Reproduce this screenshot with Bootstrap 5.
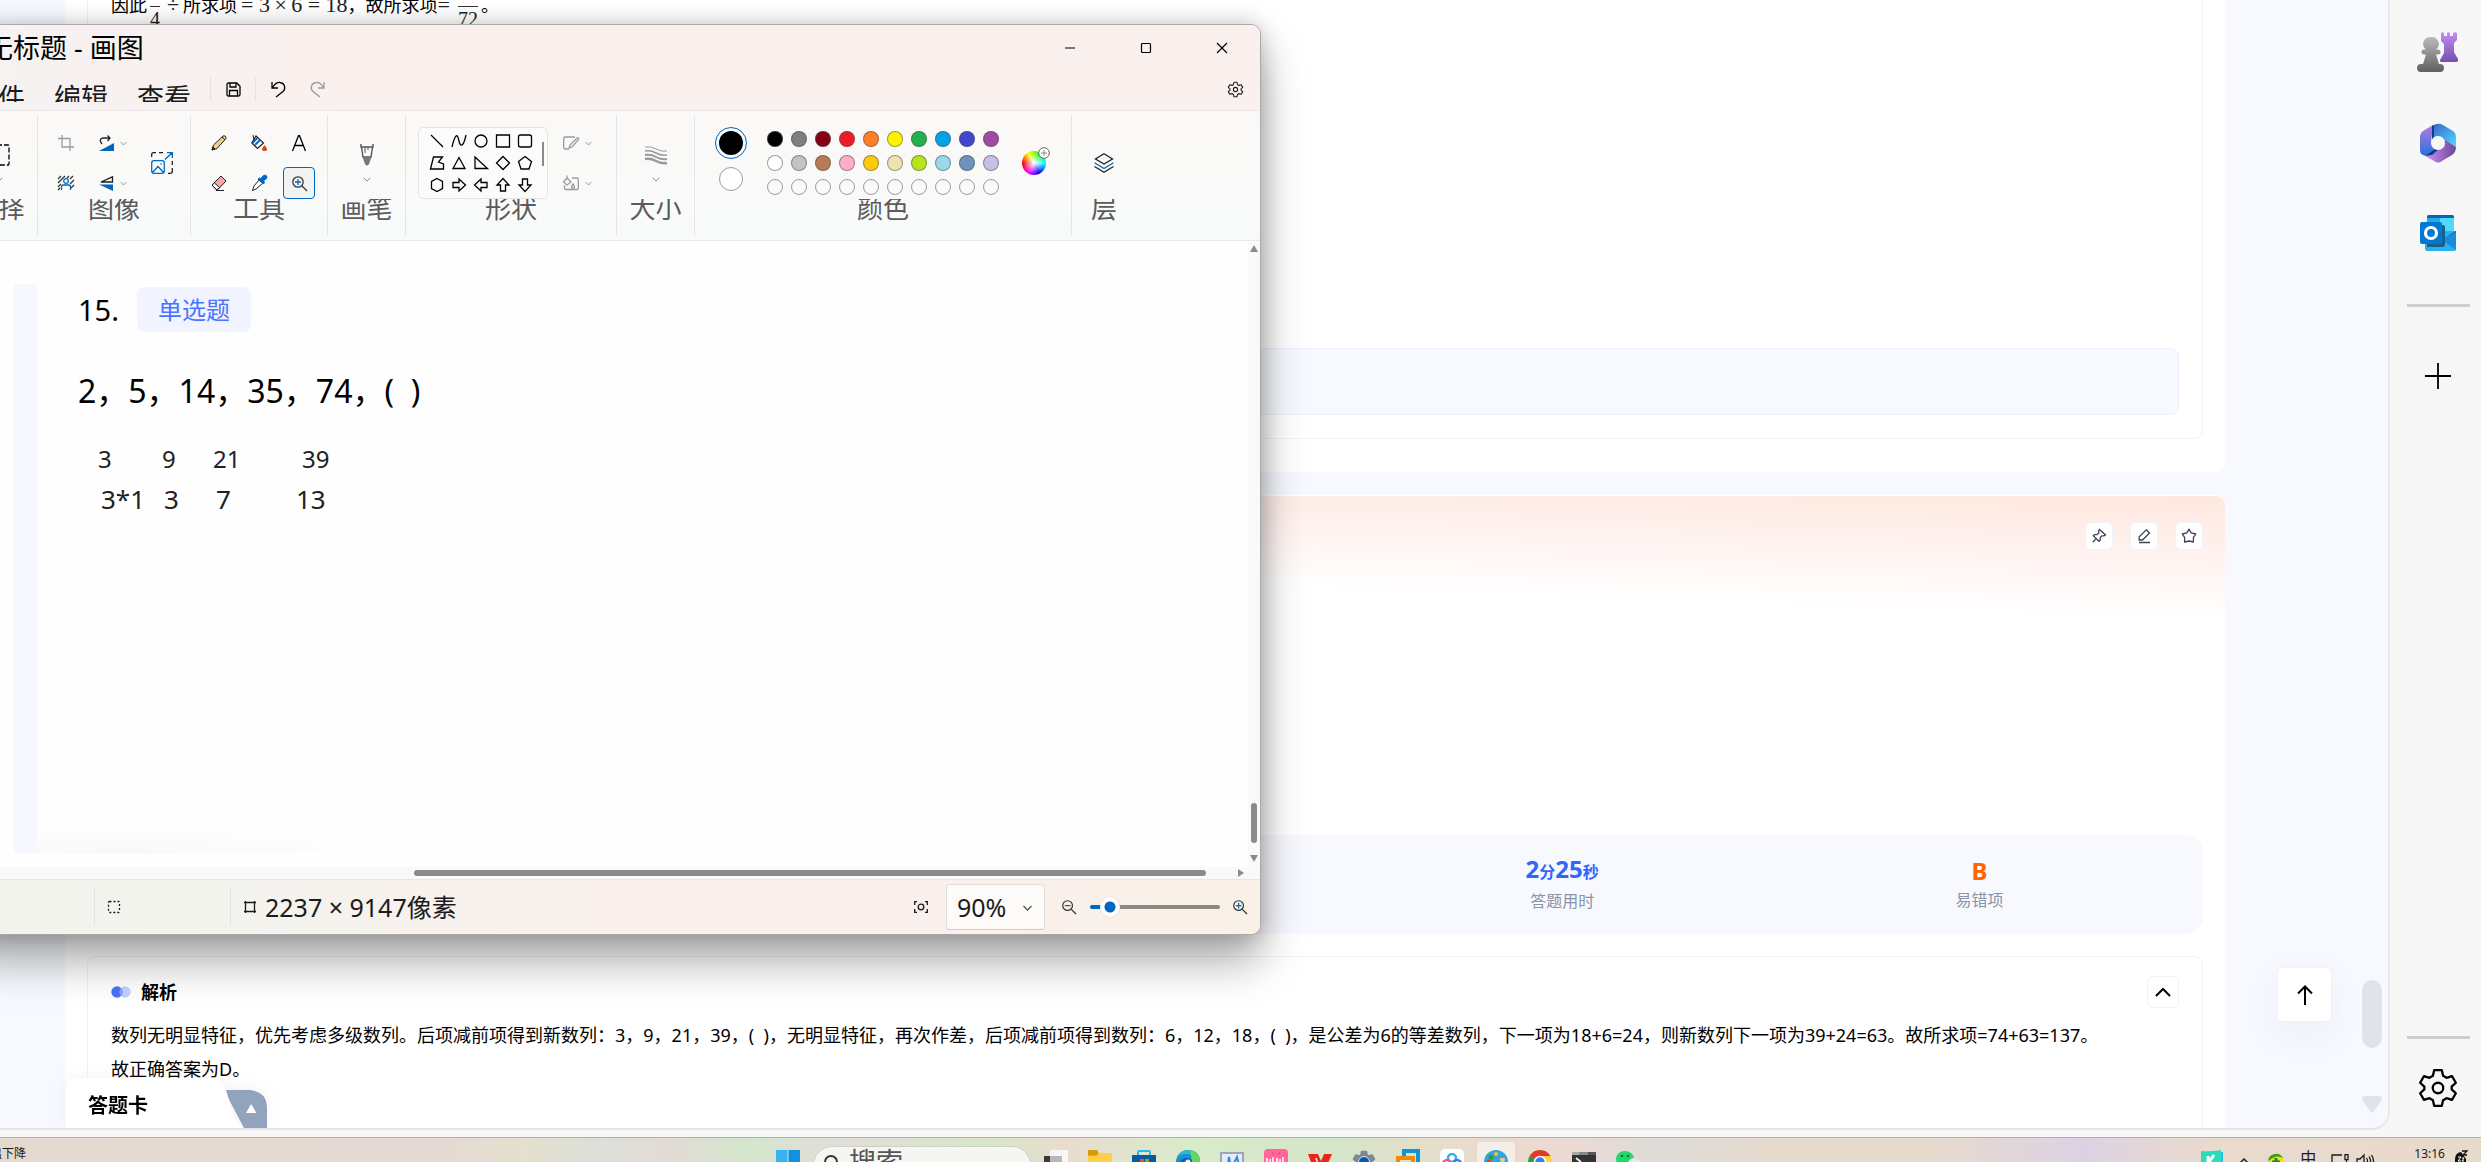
<!DOCTYPE html>
<html lang="zh-CN">
<head>
<meta charset="utf-8">
<meta name="viewport" content="width=device-width, initial-scale=1">
<title>桌面</title>
<link rel="stylesheet" href="https://cdn.jsdelivr.net/npm/bootstrap@5.3.0/dist/css/bootstrap.min.css">
<style>
body{font-family:"Noto Sans","Noto Sans CJK SC",sans-serif;font-size:18px;line-height:34px;color:#000;background:#f7f7f7}
button{font:inherit;color:inherit;border:0;background:none;padding:0;display:inline-flex;align-items:center;justify-content:center}
svg{display:block;flex:none;overflow:visible}
.ln{fill:none;stroke:currentColor;stroke-width:1.3}
/* browser */
.browser{min-height:0;padding-bottom:7px}
.viewport{background:#f7f9fe;border-right:2px solid #e8eaec;border-bottom:2px solid #e3e5e7;border-bottom-right-radius:18px;padding:0 163px 0 65px;min-width:0}
.qcard{background:#fff;padding:0 22px}
.qcard-a{border-radius:0 0 10px 10px;padding-bottom:33px}
.panel{border:1px solid #eff1fb;border-radius:8px;padding:0 23px}
.panel-a{border-top:0;border-radius:0 0 8px 8px;padding-bottom:23px}
.formula{height:348px;white-space:nowrap}
.formula>div{height:10px;line-height:10px}
.mathy{font-family:"Liberation Serif",serif;font-size:22px;color:#222}
.frac{align-self:flex-start;font-size:20px;margin:6px 3px 0;border-top:1px solid #333;padding-top:5px;line-height:14px}
.answerbox{height:67px;background:#f7f9fe;border:1px solid #eff2fb;border-radius:8px}
.qcard-b{margin-top:23px;border-radius:10px 10px 0 0;background:linear-gradient(182deg,#fee7dd,#fff2ef 29%,#fff 62%) top/100% 126px no-repeat #fff;border-top:1px solid #fff}
.tools{padding-top:26px;gap:17px}
.toolbtn{width:28px;height:28px;background:#fff;border-radius:6px;border:1px solid #f1f3fb;color:#3c4354}
.stats{margin-top:285px;height:99px;background:#f8f9fe;border-radius:18px;padding:0 15px}
.stat{width:20%;line-height:30px}
.stat strong{font-size:24px}.stat small{font-size:16px}
.stat span{font-size:16px;color:#8a93a8;line-height:28px}
.panel-b{margin-top:22px;padding-top:18px;height:240px}
.fold{width:32px;height:32px;border:1px solid #eff1fb;border-radius:6px}
.explain{padding-top:9px}
.sheet{left:66px;bottom:0;width:202px;height:50px;filter:drop-shadow(0 -2px 8px rgba(60,70,120,.06))}
.sheet b{left:22px;top:11px;font-size:20px}
.totop{right:56px;bottom:106px;width:55px;height:55px;background:#fff;border:1px solid #f1f2fa;border-radius:6px;box-shadow:0 12px 36px rgba(90,90,140,.06)}
.pagescroll{right:6px;bottom:15px;width:20px;gap:48px}
.pagescroll i{width:20px;height:68px;border-radius:10px;background:#e1e2ec}
.side{width:91px;padding:32px 0 21px 5px}
.side button{min-height:42px}
.side hr{width:63px;height:3px;margin:0;border:0;background:#cfcfcf;opacity:1}
/* paint window */
.paint{left:-41px;right:1220px;top:24px;bottom:227px;background:#fff;border:1px solid #aaa9a9;border-radius:10px;box-shadow:0 26px 44px rgba(0,0,0,.34),0 0 22px rgba(0,0,0,.2);overflow:hidden}
.paint-head{background:linear-gradient(100deg,#f5f3f2 0,#f7f1f0 14%,#faf0ee 30%,#faf0ee)}
.ptitle{height:46px;padding-left:26px;font-size:27px}
.winbtn{width:76px;height:46px}
.pmenu{height:40px;padding:0 16px 3px 11px;border-bottom:1px solid #e8e6e6}
.pmenu a{font-size:27px;line-height:32px;height:20px;overflow:hidden;align-self:flex-start;margin:11px 29px 0 0;color:#1b1b1b;text-decoration:none}
.vsep{width:1px;height:24px;background:#e4e2e1}
.pmenu .vsep:first-of-type{margin-left:-10px}
.mbtn{width:44px;height:30px}
.ribbon{height:130px;padding:4px 0;border-bottom:1px solid #e7e7e7;background:linear-gradient(180deg,#fbf9f7,#f8fafa)}
.rgroup{padding-top:12px;border-right:1px solid #e6e6e6;align-items:center}
.rgroup:last-child{border:0}
.rbody{height:72px;align-items:center;justify-content:center}
.rlabel{height:22px;overflow:hidden;display:flex;align-items:flex-end;font-size:26px;line-height:26px;color:#5b5b5b}
.w78{width:78px}.w153{width:153px}.w137{width:137px}.w211{width:211px}.w377{width:377px}.w64{width:64px}
.cell{width:28px;height:28px}
.cellb{width:32px;height:32px}
.chev{width:12px;height:24px;color:#8b8b8b}
.dim{color:#9b9b9b}
.picked{border:1px solid #0067c0;border-radius:4px;background:#f1f3f3}
.grid3{display:grid;grid-template-columns:repeat(3,32px);gap:8px}
.vstack24{padding-top:8px}
.vstack24 button{height:24px;width:28px}
.shapebody{gap:9px;padding-right:7px}
.shapes{width:130px;height:72px;border:1px solid #e4e4e4;border-radius:5px;padding:2px 3px 2px 7px;background:#fbfbfa}
.shapegrid{display:grid;grid-template-columns:repeat(5,22px);grid-auto-rows:22px}
.shapes i{width:2px;height:24px;background:#8a8a8a;margin:12px 0 0 auto;align-self:flex-start}
.pair{gap:8px;padding-bottom:8px}
.ring{width:32px;height:32px;border:1px solid #0067c0;border-radius:50%;padding:3px}
.ring i,.secondary{display:block;width:24px;height:24px;border-radius:50%;background:#000}
.secondary{background:#fff;border:1px solid #9a9a9a}
.swatches{display:grid;grid-template-columns:repeat(10,24px);grid-auto-rows:24px}
.swatches i{width:16px;height:16px;border-radius:50%;border:1px solid rgba(80,80,80,.55)}
.wheel{width:24px;height:24px;border-radius:50%;background:radial-gradient(circle,#fff 0,rgba(255,255,255,0) 65%),conic-gradient(from 90deg,#0ff,#00f,#f0f,#f00,#ff0,#0f0,#0ff)}
.wheelbox{width:30px}
.wheelbox svg{right:-1px;top:-4px}
.work{min-height:0}
.canvas{background:#fefefe;min-width:0}
.gutter{left:54px;top:43px;bottom:14px;width:23px;background:#f7f8fe}
.fade-end{left:77px;bottom:14px;width:340px;height:24px;background:radial-gradient(ellipse at 25% 100%,#f8f8f9,#fefefe 75%)}
.doc{padding:46px 0 0 118px}
.num{font-size:29px;margin-right:21px;width:38px}
.kind{height:45px;padding:0 21px;background:#f1f3fe;border-radius:8px;color:#4a73ff;font-size:24px}
.ask{font-size:32px;margin-top:41px;line-height:36px;white-space:pre}
.note{left:0;color:#222;line-height:30px}
.n1{top:203px;font-size:24px}.n2{top:243px;font-size:26px}
.note span{position:absolute}
.vscroll{width:12px;background:#f9f9f9;padding:4px 0}
.vscroll i{width:6px;height:40px;border-radius:3px;background:#8a8a8a;margin:auto 0 12px}
.hscroll{height:13px;background:#f9f9f8;padding:0 16px 0 454px;border-bottom:1px solid #e8e6e4}
.hscroll i{height:6px;border-radius:3px;background:#8a8a8a;margin-right:32px}
.pstatus{height:54px;background:linear-gradient(90deg,#f3f3ee,#f4f3ee 22%,#f9f0ed 48%,#f9efed 72%,#f9f1e7);color:#1b1b1b;font-size:26px}
.pstatus .vsep{height:38px}
.scell{width:135px;padding-left:13px}
.dims{font-size:25px;padding-left:13px;gap:9px}
.zoomsel{width:99px;height:46px;border:1px solid #e3dedb;border-bottom-color:#cfcac7;border-radius:4px;background:#fcfbf9;appearance:none;padding:0 0 0 10px;font-size:25px;line-height:30px;color:#1b1b1b}
.selchev{right:13px;top:20px;pointer-events:none}
.slide{appearance:none;width:130px;height:20px;background:none;margin:0}
.slide::-webkit-slider-runnable-track{height:4px;border-radius:2px;background:linear-gradient(90deg,#0067c0 15%,#8b8782 15%)}
.slide::-webkit-slider-thumb{appearance:none;width:20px;height:20px;margin-top:-8px;border-radius:50%;background:radial-gradient(circle,#0067c0 5px,#fff 6px);box-shadow:0 0 1px #999}
/* taskbar */
.taskbar{height:25px;border-top:1px solid #b4afac;overflow:hidden;background:linear-gradient(90deg,#e4d9cf 0,#e4dad3 18%,#e5dfcd 21%,#dcdfd8 24%,#e3dbd5 27%,#d3e6cd 30%,#e2ddd8 34%,#d6e7c7 39.5%,#e9dccf 43%,#d8ebca 48%,#d5e5c8 54%,#e9dccb 59%,#ecd9d2 63%,#dedcd8 67%,#e6dace 71%,#e6dace 78%,#ddd2e4 84%,#e9dacd 89%,#e8dacb);font-size:12px;line-height:16px;color:#1b1b1b}
.weather{width:766px;padding-top:8px}
.weather a{color:#1b1b1b;text-decoration:none;margin-left:-22px}
.task{width:44px;height:44px;padding-top:12px;align-items:flex-start;flex:none}
.task.on span{width:38px;height:38px;margin-top:-8px;padding-top:8px;border-radius:4px;background:#f3eee8;display:flex;justify-content:center}
.search{width:218px;height:38px;margin:8px 3px 0;border:1px solid #cfd0c8;border-radius:20px;background:#f4f6f1;padding:0 0 0 10px}
.search input{width:150px;border:0;background:none;font-size:27px;line-height:30px;height:30px;padding:0;margin-left:10px;outline:0}
.search input::placeholder{color:#555;opacity:1}
.tray{width:32px;height:24px;align-items:flex-start;padding-top:12px;font-size:16px}
</style>
</head>
<body class="d-flex flex-column vh-100 overflow-hidden position-relative">
<svg width="0" height="0" class="position-absolute"><defs>
<symbol id="cv" viewBox="0 0 8 5"><path d="M.7.7 4 4.2 7.3.7" fill="none" stroke="currentColor"/></symbol>
<symbol id="gear" viewBox="0 0 24 24"><path d="M9.8 1.8h4.4l.7 3.2 2 1.2 3.1-1 2.2 3.8-2.4 2.2v1.6l2.4 2.2-2.2 3.8-3.1-1-2 1.2-.7 3.2H9.8L9.1 19l-2-1.2-3.1 1L1.800 15l2.400-2.200v-1.600L1.800 9 4 5.200l3.100 1 2-1.200z" stroke-linejoin="round"/><circle cx="12" cy="12" r="3"/></symbol>
</defs></svg>

<div class="browser d-flex flex-grow-1">
  <main class="viewport flex-grow-1 position-relative overflow-hidden">
    <section class="qcard qcard-a">
      <div class="panel panel-a">
        <div class="formula"><div class="d-flex align-items-center">因此<span class="mathy frac">4</span><span class="mathy mx-1">÷</span>所求项<span class="mathy ms-1">= 3&thinsp;×&thinsp;6 = 18</span>，故所求项<span class="mathy">=</span><span class="mathy frac ms-2">72</span>。</div></div>
        <div class="answerbox"></div>
      </div>
    </section>
    <section class="qcard qcard-b">
      <div class="tools d-flex justify-content-end">
        <button class="toolbtn" aria-label="置顶"><svg class="ln" width="16" height="16" viewBox="0 0 16 16"><path d="M8.500 1.500 14.500 7l-1.500.9-2.300-.1-1.500 2 .1 2.300-1.300 1.200L2.200 7.800l1.300-1.200 2.300.1 2-1.700-.2-2.300zM5 10.600l-3.200 3.600"/></svg></button>
        <button class="toolbtn" aria-label="笔记"><svg class="ln" width="16" height="16" viewBox="0 0 16 16"><path d="M10.300 1.800 13.500 5 6.500 12H3.200V8.800zM3 14.500h11"/></svg></button>
        <button class="toolbtn" aria-label="收藏"><svg class="ln" width="16" height="16" viewBox="0 0 16 16"><path d="M8 1.200l2.200 3.600 4.600 1.200-2.400 3.400v4.600L8 13l-4.400 1V9.400L1.200 6l4.600-1.200z" stroke-linejoin="round"/></svg></button>
      </div>
      <div class="stats d-flex justify-content-end align-items-center text-center">
        <div class="stat d-flex flex-column"><strong style="color:#2f66fb">2<small>分</small>25<small>秒</small></strong><span>答题用时</span></div>
        <div class="stat d-flex flex-column"><strong style="color:#ff6400">B</strong><span>易错项</span></div>
      </div>
      <div class="panel panel-b">
        <div class="d-flex align-items-center">
          <svg width="20" height="12" viewBox="0 0 20 12"><circle cx="14" cy="6" r="5.700" fill="#c3d0fb"/><circle cx="6" cy="6" r="5.700" fill="#4a73fb"/><path d="M10 2a5.700 5.700 0 0 1 0 8 5.700 5.700 0 0 1 0-8" fill="#8ea7fb"/></svg>
          <b style="margin-left:10px">解析</b>
          <button class="fold ms-auto" aria-label="收起"><svg width="16" height="9" viewBox="0 0 16 9" fill="none" stroke="#000" stroke-width="2"><path d="M1 8l7-7 7 7"/></svg></button>
        </div>
        <div class="explain">数列无明显特征，优先考虑多级数列。后项减前项得到新数列：3，9，21，39，(&nbsp;&nbsp;)，无明显特征，再次作差，后项减前项得到数列：6，12，18，(&nbsp;&nbsp;)，是公差为6的等差数列，下一项为18+6=24，则新数列下一项为39+24=63。故所求项=74+63=137。<br>故正确答案为D。</div>
      </div>
    </section>
    <div class="sheet position-absolute">
      <svg width="202" height="52" viewBox="0 0 202 52"><path d="M158 12h26q17 2 17 18v22h-22z" fill="#91a3bd"/><path d="M0 52V12Q0 0 12 0h132c14 0 16 11 19 22 4 14 8 27 17 30z" fill="#fff"/><path d="M180 35l4.500-8q.7-1 1.400 0l4.500 8z" fill="#fff"/></svg>
      <b class="position-absolute">答题卡</b>
    </div>
    <button class="totop position-absolute" aria-label="回到顶部"><svg width="16" height="20" viewBox="0 0 16 20" fill="none" stroke="#000" stroke-width="2"><path d="M8 20V2M1 8.500l7-7 7 7"/></svg></button>
    <div class="pagescroll position-absolute d-flex flex-column"><i></i><svg width="20" height="17" viewBox="0 0 20 17"><path d="M2 0h16q3 1 1.500 4l-7.500 11q-2 3-4 0L.5 4Q-1 1 2 0z" fill="#e1e2ec"/></svg></div>
  </main>
  <aside class="side d-flex flex-column align-items-center">
    <button aria-label="游戏"><svg width="42" height="42" viewBox="0 0 42 42"><defs><linearGradient id="g1" x2="0" y2="1"><stop stop-color="#bbb"/><stop offset="1" stop-color="#606060"/></linearGradient><linearGradient id="g2" x2="0" y2="1"><stop stop-color="#c48cf0"/><stop offset="1" stop-color="#7250b0"/></linearGradient></defs><path d="M24 1q1.500-1.500 3 0v3h3V1q1.500-1.500 3 0v3h3V1q1.500-1.500 4 0v7l-3 3v9l4 7v2q0 1-2 1H24q-1 0-1-2l4-7v-9l-3-3z" fill="url(#g2)"/><path d="M14 5a7 7 0 0 1 5 12.500h2a2.500 2.500 0 0 1 0 5h-2L22 32h1a4 4 0 0 1 0 8H4a4 4 0 0 1 0-8h2l3-9.500H7a2.500 2.500 0 0 1 0-5h2A7 7 0 0 1 14 5z" fill="url(#g1)"/></svg></button>
    <button aria-label="Microsoft 365" class="mt-5"><svg width="36" height="40" viewBox="0 0 36 40"><defs><linearGradient id="m1" x2="0" y2="1"><stop stop-color="#b67be0"/><stop offset="1" stop-color="#2672d8"/></linearGradient><linearGradient id="m2" x2="1" y2="1"><stop stop-color="#3a62c8"/><stop offset="1" stop-color="#4fdcff"/></linearGradient><linearGradient id="m3" x2="1" y2="0"><stop stop-color="#d092fa"/><stop offset="1" stop-color="#6b4595"/></linearGradient></defs><path d="M13 2 3 8Q0 10 0 13v14q0 4 3 5l3 1 11-7-6-6z" fill="url(#m1)"/><path d="M12 3q6-4 11-1l10 6q3 2 3 5v11L24 17l-6-4-6 2z" fill="url(#m2)"/><path d="M36 24q0 5-4 8l-10 6q-4 3-8 0l-9-5 12-7 8-9z" fill="url(#m3)"/><path d="M12 3v15l2-4V2zM5 33l7-1 6-5-3-1z" fill="#0b3f86"/><circle cx="18" cy="20" r="7" fill="#f7f7f7"/></svg></button>
    <button aria-label="Outlook" class="mt-5"><svg width="36" height="36" viewBox="0 0 36 36"><rect x="7" y="0" width="27" height="20" rx="2" fill="#28a8ea"/><path d="M7 3V2q0-2 2-2h23q2 0 2 2v1z" fill="#0a64b0"/><path d="M20 3h14v13H20z" fill="#50d9ff"/><path d="M5 16h31v18q0 2-2 2H7q-2 0-2-2z" fill="#28b0f0"/><path d="M36 17v18L22 25z" fill="#148ee0"/><path d="M36 17v-1l-13 8z" fill="#0a4a90"/><path d="M7 10h16q2 0 2 2v17q0 3-3 3H7z" fill="#1b5f87"/><rect y="7" width="22" height="22" rx="2" fill="#0078d4"/><circle cx="11" cy="18" r="5.500" fill="none" stroke="#fff" stroke-width="3.200"/></svg></button>
    <hr style="margin-top:50px">
    <button aria-label="自定义" class="mt-5"><svg width="26" height="26" viewBox="0 0 26 26" stroke="#000" stroke-width="1.800"><path d="M13 0v26M0 13h26"/></svg></button>
    <hr class="mt-auto">
    <button aria-label="设置" style="margin-top:28px"><svg width="42" height="42" fill="none" stroke="#000" stroke-width="1.300"><use href="#gear"/></svg></button>
  </aside>
</div>

<footer class="taskbar d-flex flex-shrink-0">
  <div class="weather"><a href="#">气温下降</a></div>
  <button class="task" aria-label="开始"><svg width="24" height="24"><path d="M0 0h11.500v24H0z" fill="#35b4ef"/><path d="M12.500 0H24v24H12.500z" fill="#1490de"/></svg></button>
  <label class="search d-flex align-items-start flex-shrink-0"><svg class="mt-2" width="15" height="18" fill="none" stroke="#333" stroke-width="2"><circle cx="7" cy="7" r="6"/><path d="M11 11l4 5"/></svg><input type="text" placeholder="搜索" aria-label="搜索"></label>
  <button class="task" aria-label="任务视图"><svg width="24" height="24"><rect x="6" width="18" height="16" rx="1" fill="#f6f6f6"/><rect y="6" width="18" height="18" fill="#3a3a3a"/><path d="M6 6h12v10H6z" fill="#b8b8b8"/></svg></button>
  <button class="task" aria-label="文件资源管理器"><svg width="24" height="24"><path d="M0 1q0-1 1-1h8l2 3h12q1 0 1 1v20H0z" fill="#f0a900"/><path d="M0 6h9l2-3h13v21H0z" fill="#ffcf48"/><path d="M0 5V1q0-1 1-1h8l1 3-2 2z" fill="#d79a0d"/></svg></button>
  <button class="task" aria-label="应用商店"><svg width="24" height="24"><path d="M0 5h24v19H0z" fill="#0d56a0"/><path d="M6 5V2q0-1 1-1h10q1 0 1 1v3" fill="none" stroke="#2bb7f4" stroke-width="2"/><path d="M8 9h4v4H8z" fill="#f25022"/><path d="M13 9h4v4h-4z" fill="#7fba00"/></svg></button>
  <button class="task" aria-label="Edge"><svg width="24" height="24"><circle cx="12" cy="12" r="12" fill="#1b8fd4"/><path d="M1 8A12 12 0 0 1 12 0q12 0 12 12-1 5-5 5V9q-3-5-9-5-6 0-9 4" fill="#2fb6cf"/><path d="M14 0q10 2 10 12 0 5-5 5c-4 0-3-3-3-5z" fill="#63d75c"/><path d="M3 15q2-8 9-7 5 1 4 5l-3 2q0-5-4-4-4 2-2 9z" fill="#0f5fae"/><circle cx="12" cy="12" r="2.500" fill="#e8f4f6"/></svg></button>
  <button class="task" aria-label="监视器"><svg width="24" height="24"><path d="M1 3h22v21H1z" fill="#e6ecf5" stroke="#9aa5b5" stroke-width="2"/><path d="M4 18l4-4 1-7 2 12M14 13l3-6 2 8 3 4" fill="none" stroke="#2c8be0" stroke-width="2"/></svg></button>
  <button class="task" aria-label="哔哩哔哩"><svg width="24" height="24"><rect width="24" height="24" rx="4" y="-1" fill="#ff6699"/><path d="M8 2l2 3M16 2l-2 3" stroke="#e2487c"/><path d="M3 8v6M6 9v5M9 7v7M13 8v6M16 9v5M19 7v7" stroke="#fff" stroke-width="1.500"/></svg></button>
  <button class="task" aria-label="WPS"><svg width="24" height="24"><path d="M0 4h10l3 7 3-7h8l-7 16h-5L9 8H7l4 12H6z" fill="#ef2319"/></svg></button>
  <button class="task" aria-label="设置"><svg width="24" height="24"><use href="#gear" fill="#7a8794" stroke="#7a8794" stroke-width="2"/><circle cx="12" cy="12" r="5.500" fill="#0a5aa8" stroke="#dbe4ee" stroke-width="1"/></svg></button>
  <button class="task" aria-label="虚拟机"><svg width="24" height="24" fill="none" stroke-width="4"><path d="M8 8V1h14v15h-6" stroke="#0f95d7"/><path d="M2 24V8h15v16" stroke="#f38b00"/></svg></button>
  <button class="task" aria-label="网盘"><svg width="24" height="24"><rect width="24" height="26" rx="5" y="-1" fill="#fff"/><circle cx="12" cy="8" r="4" fill="none" stroke="#2fb3f4" stroke-width="2.500"/><circle cx="7" cy="14" r="4" fill="none" stroke="#ed5a82" stroke-width="2.500"/><circle cx="17" cy="14" r="4" fill="none" stroke="#3f78f2" stroke-width="2.500"/></svg></button>
  <button class="task on" aria-label="画图"><span><svg width="24" height="24"><circle cx="12" cy="12" r="12" fill="#2ea7dd"/><circle cx="7" cy="7" r="2.500" fill="#2f9e44"/><circle cx="12" cy="4" r="2" fill="#f7c51e"/><circle cx="5" cy="12" r="2.500" fill="#d8452a"/><path d="M16 8h5l-1 6h-3z" fill="#e8c8a0"/></svg></span></button>
  <button class="task" aria-label="Chrome"><svg width="24" height="24"><circle cx="12" cy="12" r="12" fill="#fdd23a"/><path d="M12 12L1.600 6A12 12 0 0 1 22.400 6H12z" fill="#e0382c"/><path d="M12 12L1.600 6A12 12 0 0 0 8 23z" fill="#1f9d50"/><circle cx="12" cy="12" r="5.500" fill="#3b7ded" stroke="#fff" stroke-width="1.500"/></svg></button>
  <button class="task" aria-label="终端"><svg width="24" height="24"><path d="M0 2h24v22H0z" fill="#333"/><path d="M0 2h7v3H0z" fill="#aaa"/><path d="M7 2h9v3H7z" fill="#888"/><path d="M16 2h8v3h-8z" fill="#555"/><path d="M4 8l5 4" stroke="#eee" stroke-width="2"/></svg></button>
  <button class="task" aria-label="微信"><svg width="24" height="24"><ellipse cx="9" cy="9" rx="9" ry="8" fill="#22d66b"/><circle cx="6" cy="6" r="1.200" fill="#126b38"/><circle cx="12" cy="6" r="1.200" fill="#126b38"/><ellipse cx="18" cy="14" rx="6" ry="6" fill="#e9e9e9"/></svg></button>
  <div class="d-flex ms-auto" style="padding-right:13px">
    <button class="tray" aria-label="输入法K"><svg width="22" height="22"><path d="M12 2h10v20H12z" fill="#2ebcf4"/><path d="M0 1q9 1 20-1v22H0z" fill="#2bdcb8"/><path d="M7 6v12M13 5l-5 7" stroke="#fff" stroke-width="3"/></svg></button>
    <button class="tray" aria-label="更多"><svg class="mt-2" width="10" height="6" fill="none" stroke="#222" stroke-width="1.500"><path d="M0 6l5-5 5 5"/></svg></button>
    <button class="tray" aria-label="安全卫士"><svg class="mt-1" width="16" height="16"><circle cx="8" cy="8" r="8" fill="#ffd91c"/><path d="M0 7a8 8 0 0 1 15-3q-6-3-10 0z" fill="#3f9f1c"/><path d="M8 4v8M4 8h8" stroke="#17882c" stroke-width="3"/></svg></button>
    <button class="tray" aria-label="中文">中</button>
    <button class="tray" aria-label="网络"><svg width="18" height="14" class="ln mt-1" viewBox="0 0 18 14"><path d="M11 1H1v12h13M14 .7h3v5h-3zM15.500 6v4"/></svg></button>
    <button class="tray" style="width:18px" aria-label="音量"><svg width="18" height="14" class="ln mt-1" viewBox="0 0 18 14"><path d="M1 5h3l4-4v12L4 9H1zM10.500 4q2 3 0 6M13 2.500q3 4.500 0 9M15.500 1q4 6 0 12"/></svg></button>
    <span style="margin:8px 9px 0 40px">13:16</span>
    <button class="tray" style="width:14px" aria-label="通知"><svg width="14" height="16" viewBox="0 0 14 16"><path d="M7 2Q1 3 1 9v7h11V9z" fill="#111"/><path d="M8 1h5l-4 4h4" fill="none" stroke="#111" stroke-width="1.300"/><path d="M4 7h3l-3 4h3M8 8h2l-2 3h2" fill="none" stroke="#fff"/></svg></button>
  </div>
</footer>

<section class="paint position-absolute d-flex flex-column" aria-label="画图">
  <header class="paint-head">
    <div class="ptitle d-flex align-items-center"><span>无标题 - 画图</span>
      <button class="winbtn ms-auto" aria-label="最小化"><svg width="10" height="10" stroke="#000" stroke-width="1.200"><path d="M0 5h10"/></svg></button>
      <button class="winbtn" aria-label="最大化"><svg width="10" height="10" fill="none" stroke="#000" stroke-width="1.200"><rect x=".5" y=".5" width="9" height="9" rx="1"/></svg></button>
      <button class="winbtn" aria-label="关闭"><svg width="10" height="10" stroke="#000" stroke-width="1.200"><path d="M0 0l10 10M10 0L0 10"/></svg></button>
    </div>
    <nav class="pmenu d-flex align-items-center">
      <a href="#">文件</a><a href="#">编辑</a><a href="#">查看</a>
      <span class="vsep"></span>
      <button class="mbtn" aria-label="保存"><svg class="ln" width="15" height="15" viewBox="0 0 15 15"><path d="M1 2.500Q1 1 2.500 1h8.300L14 4.200v8.300q0 1.500-1.500 1.500h-10Q1 14 1 12.500zM4 1v4h6V1M3.500 14V8.500h8V14"/></svg></button>
      <span class="vsep"></span>
      <button class="mbtn" aria-label="撤销"><svg class="ln" width="15" height="16" viewBox="0 0 15 16"><path d="M1 1v6h6M1.500 6.500Q5 1 9 1.500c5 .5 6 6 3 9L5 16"/></svg></button>
      <button class="mbtn dim" style="width:34px" aria-label="重做"><svg class="ln" width="15" height="16" viewBox="0 0 15 16"><path d="M14 1v6H8M13.500 6.500Q10 1 6 1.500c-5 .5-6 6-3 9L10 16"/></svg></button>
      <button class="ms-auto" aria-label="设置"><svg width="17" height="17" fill="none" stroke="#222" stroke-width="1.600"><use href="#gear"/></svg></button>
    </nav>
  </header>
  <div class="ribbon d-flex flex-shrink-0">
    <div class="rgroup w78 d-flex flex-column">
      <div class="rbody d-flex flex-column vstack24"><button aria-label="选择"><svg class="ln" width="22" height="22" viewBox="0 0 22 22" stroke-dasharray="5 2"><rect x="1" y="1" width="20" height="20" rx="1"/></svg></button><button class="chev" aria-label="选择选项"><svg width="8" height="5"><use href="#cv"/></svg></button></div>
      <div class="rlabel">选择</div>
    </div>
    <div class="rgroup w153 d-flex flex-column">
      <div class="rbody d-flex">
        <div class="d-flex flex-column" style="gap:12px">
          <button class="cell dim" aria-label="裁剪"><svg class="ln" width="16" height="16" viewBox="0 0 16 16"><path d="M4 0v12h12M0 3.500h12V16"/></svg></button>
          <button class="cell" aria-label="删除背景"><svg width="16" height="14" viewBox="0 0 16 14"><path d="M0 3l3-3M0 7l7-7M0 11l3-3M0 14l2-2M9 2l2-2M12 3l3-3M12 8l4-4M13 12l3-3" stroke="#333" stroke-width="1.300"/><circle cx="8" cy="5" r="2.300" fill="#fff" stroke="#0067c0" stroke-width="1.300"/><path d="M3.500 14v-3q0-2 2-2h5q2 0 2 2v3" fill="#fff" stroke="#0067c0" stroke-width="1.300"/></svg></button>
        </div>
        <div class="d-flex flex-column" style="gap:12px;margin:0 16px 0 12px">
          <div class="d-flex align-items-center"><button class="cell" aria-label="旋转"><svg width="15" height="15" viewBox="0 0 15 15"><path d="M15 7v8H0z" fill="#0067c0"/><path d="M3 8Q-1 3 4 2h7M8.500-.5 11 2 8.500 5" class="ln" style="color:#222"/></svg></button><span class="chev d-flex align-items-center"><svg width="7" height="5"><use href="#cv"/></svg></span></div>
          <div class="d-flex align-items-center"><button class="cell" aria-label="翻转"><svg width="15" height="15" viewBox="0 0 15 15"><path d="M14 8.500v6.500L0 8.500z" fill="#0067c0"/><path d="M13.500.8V6H2z" class="ln" style="color:#222"/></svg></button><span class="chev d-flex align-items-center"><svg width="7" height="5"><use href="#cv"/></svg></span></div>
        </div>
        <button class="cell" aria-label="调整大小"><svg width="22" height="22" viewBox="0 0 22 22" fill="none" stroke-width="1.300"><path d="M.7 5V2.500Q.7.700 2.500.700H5M8 .7h4M21.300 9v4M21.300 16v3.500q0 1.800-2 1.800H17" stroke="#222"/><path d="M14 7.500 21 .7M16 .7h5.300V6M3 8.700h8q2.300 0 2.300 2.300v8q0 2.300-2.300 2.300H3Q.7 21.300.7 19v-8Q.7 8.700 3 8.700zM1.500 20.500l5.500-6 5.500 6" stroke="#0067c0"/><circle cx="10" cy="12" r=".8" fill="#0067c0"/></svg></button>
      </div>
      <div class="rlabel">图像</div>
    </div>
    <div class="rgroup w137 d-flex flex-column">
      <div class="rbody grid3">
        <button class="cellb" aria-label="铅笔"><svg width="16" height="16" viewBox="0 0 16 16"><path d="M1 15l1.500-5L12 1q3-1 3 2.500L6 13.500z" fill="#f2cf7c" stroke="#222"/><path d="M11 2l3 3M1 15l3-1-2-2z" stroke="#222" fill="#222"/></svg></button>
        <button class="cellb" aria-label="填充"><svg width="16" height="16" viewBox="0 0 16 16"><path d="M5 1l7.500 7L6.500 13.500.8 8z" fill="#fff" stroke="#222" stroke-width="1.200"/><path d="M1.500 8l5-5M4 10l5-5" stroke="#0067c0" stroke-width="1.800"/><path d="M3 5L2 0" stroke="#222"/><path d="M13.500 10q5 6 0 6t0-6z" fill="#d9480f"/></svg></button>
        <button class="cellb" aria-label="文本"><svg class="ln" width="14" height="16" viewBox="0 0 14 16"><path d="M.5 16 6.500.7h1L13.500 16M3 10.500h8"/></svg></button>
        <button class="cellb" aria-label="橡皮擦"><svg width="16" height="16" viewBox="0 0 16 16"><path d="M10 1l5 5-8 8.500H5L1 10z" fill="#f6a6a6" stroke="#222"/><path d="M1 10l4.500 4.500L7 14l1.500-1.500L3.500 8z" fill="#fff" stroke="#222"/><path d="M5 15.500h8" stroke="#222"/></svg></button>
        <button class="cellb" aria-label="颜色选取器"><svg width="16" height="16" viewBox="0 0 16 16"><path d="M8 5l3.500 3.500L5 14l-3.500 1.500L3 11z" fill="#fff" stroke="#222"/><path d="M7 4l1.500-1L10 4q2-5 5-3.500T12.500 6l1 2-1.500 1z" fill="#0067c0" stroke="#0067c0"/></svg></button>
        <button class="cellb picked" aria-label="放大镜"><svg width="15" height="15" viewBox="0 0 15 15" fill="none" stroke-width="1.300"><circle cx="6" cy="6" r="5.200" stroke="#333"/><path d="M10 10l5 5" stroke="#333"/><path d="M6 3v6M3 6h6" stroke="#0067c0"/></svg></button>
      </div>
      <div class="rlabel">工具</div>
    </div>
    <div class="rgroup w78 d-flex flex-column">
      <div class="rbody d-flex flex-column vstack24"><button aria-label="画笔"><svg width="14" height="22" viewBox="0 0 14 22"><path d="M1 0v3h12V0M1.500 3 3 13h8l1.500-10" fill="none" stroke="#555" stroke-width="1.400"/><path d="M5 3v6M8 3v3" stroke="#555"/><path d="M2.500 13h9L9 20q-2 3-4 0z" fill="#777"/></svg></button><button class="chev" aria-label="画笔选项"><svg width="8" height="5"><use href="#cv"/></svg></button></div>
      <div class="rlabel">画笔</div>
    </div>
    <div class="rgroup w211 d-flex flex-column">
      <div class="rbody d-flex shapebody">
        <div class="shapes d-flex align-items-center">
          <div class="shapegrid">
            <svg class="ln" width="22" height="22"><path d="M5 5l12 12"/></svg>
            <svg class="ln" width="22" height="22"><path d="M4 17C8 0 10 6 11 11s4 8 7-6"/></svg>
            <svg class="ln" width="22" height="22"><circle cx="11" cy="11" r="6"/></svg>
            <svg class="ln" width="22" height="22"><path d="M4.500 5h13v12h-13z"/></svg>
            <svg class="ln" width="22" height="22"><rect x="4.500" y="5" width="13" height="12" rx="2"/></svg>
            <svg class="ln" width="22" height="22"><path d="M4.500 17l3-12h9l-4 5 5 2v5z"/></svg>
            <svg class="ln" width="22" height="22"><path d="M11 5.500 17 16.500H5z"/></svg>
            <svg class="ln" width="22" height="22"><path d="M5 5v11.500h12.500z"/></svg>
            <svg class="ln" width="22" height="22"><path d="M11 4.500l6.500 6.500-6.500 6.500L4.500 11z"/></svg>
            <svg class="ln" width="22" height="22"><path d="M11 4.500l6.500 5-2.500 7.500H7L4.500 9.500z"/></svg>
            <svg class="ln" width="22" height="22"><path d="M11 4.500l5.500 3v7l-5.500 3-5.500-3v-7z"/></svg>
            <svg class="ln" width="22" height="22"><path d="M5 8.500h6V5l6.500 6-6.500 6v-3.500H5z"/></svg>
            <svg class="ln" width="22" height="22"><path d="M17 8.500h-6V5l-6.500 6 6.500 6v-3.500h6z"/></svg>
            <svg class="ln" width="22" height="22"><path d="M8.500 17v-6H5l6-6.500 6 6.500h-3.500v6z"/></svg>
            <svg class="ln" width="22" height="22"><path d="M8.500 5v6H5l6 6.500 6-6.500h-3.500V5z"/></svg>
          </div><i></i>
        </div>
        <div class="d-flex flex-column" style="gap:12px">
          <div class="d-flex align-items-center dim"><button class="cell" aria-label="轮廓"><svg class="ln" width="16" height="14" viewBox="0 0 16 14"><path d="M12 1H2Q.7 1 .7 2.500v9Q.7 13 2 13h4M6 12l1-3 7-7q2-1 1.500 1.500L9 11z"/></svg></button><span class="chev d-flex align-items-center"><svg width="7" height="5"><use href="#cv"/></svg></span></div>
          <div class="d-flex align-items-center dim"><button class="cell" aria-label="形状填充"><svg class="ln" width="16" height="14" viewBox="0 0 16 14"><path d="M9 2h5q1.300 0 1.300 1.500v9q0 1-1.300 1H3Q1.500 13.500 1.500 12V9M4 2l4 4-4 3-3.500-3zM4 2V-.5M10 8q3 4 0 4t0-4z"/></svg></button><span class="chev d-flex align-items-center"><svg width="7" height="5"><use href="#cv"/></svg></span></div>
        </div>
      </div>
      <div class="rlabel">形状</div>
    </div>
    <div class="rgroup w78 d-flex flex-column">
      <div class="rbody d-flex flex-column vstack24 dim"><button aria-label="大小"><svg width="22" height="18" viewBox="0 0 22 18" fill="none" stroke="#999"><path d="M0 1q6-1 11 2t11 2"/><path d="M0 5q6-1 11 2t11 2" stroke-width="1.500"/><path d="M0 9q6-1 11 2t11 2" stroke-width="2"/><path d="M0 13q6-1 11 2t11 2" stroke-width="2.500"/></svg></button><button class="chev" aria-label="大小选项"><svg width="8" height="5"><use href="#cv"/></svg></button></div>
      <div class="rlabel">大小</div>
    </div>
    <div class="rgroup w377 d-flex flex-column">
      <div class="rbody d-flex" style="gap:16px;padding-right:2px">
        <div class="pair d-flex flex-column align-items-center"><button class="ring" aria-label="颜色 1"><i></i></button><button class="secondary" aria-label="颜色 2"></button></div>
        <div class="swatches" id="swatches"></div>
        <div class="wheelbox d-flex justify-content-center position-relative"><button class="wheel" aria-label="编辑颜色"></button><svg class="position-absolute" width="12" height="12"><circle cx="6" cy="6" r="5.300" fill="#fff" stroke="#666"/><path d="M6 3v6M3 6h6" stroke="#888"/></svg></div>
      </div>
      <div class="rlabel">颜色</div>
    </div>
    <div class="rgroup w64 d-flex flex-column">
      <div class="rbody d-flex"><button class="cell" aria-label="图层"><svg width="20" height="20" viewBox="0 0 20 20" fill="none" stroke-width="1.300"><path d="M10 .8l8.500 5.200-8.500 5L1.500 6z" stroke="#222"/><path d="M.5 9.800l9.500 5.700 9.500-5.700" stroke="#0067c0"/><path d="M.5 13.500l9.500 5.700 9.500-5.700" stroke="#222"/></svg></button></div>
      <div class="rlabel">层</div>
    </div>
  </div>
  <div class="work d-flex flex-grow-1">
    <div class="canvas flex-grow-1 position-relative overflow-hidden">
      <div class="gutter position-absolute"></div><div class="fade-end position-absolute"></div>
      <div class="doc">
        <div class="d-flex align-items-center"><span class="num">15.</span><span class="kind d-flex align-items-center">单选题</span></div>
        <div class="ask">2，5，14，35，74，(  )</div>
      </div>
      <div class="note n1 position-absolute"><span style="left:138px">3</span><span style="left:202px">9</span><span style="left:253px">21</span><span style="left:342px">39</span></div>
      <div class="note n2 position-absolute"><span style="left:141px">3*1</span><span style="left:204px">3</span><span style="left:256px">7</span><span style="left:336px">13</span></div>
    </div>
    <div class="vscroll d-flex flex-column align-items-center"><svg width="8" height="8"><path d="M4 0l4 7H0z" fill="#8a8a8a"/></svg><i></i><svg width="8" height="8"><path d="M4 7l4-7H0z" fill="#8a8a8a"/></svg></div>
  </div>
  <div class="hscroll d-flex align-items-center flex-shrink-0"><i class="flex-grow-1"></i><svg width="6" height="8"><path d="M0 0l6 4-6 4z" fill="#8a8a8a"/></svg></div>
  <div class="pstatus d-flex align-items-center flex-shrink-0">
    <span style="width:134px"></span><span class="vsep"></span>
    <span class="scell"><svg class="ln" width="12" height="12" stroke-dasharray="2 2"><rect x=".5" y=".5" width="11" height="11" rx="1"/></svg></span><span class="vsep"></span>
    <span class="dims d-flex align-items-center text-nowrap"><svg class="ln" width="12" height="12"><path d="M1.500 0v12M10.500 0v12M0 1.500h12M0 10.500h12"/></svg>2237 × 9147像素</span>
    <button class="ms-auto" style="margin-right:18px" aria-label="适应窗口"><svg class="ln" width="14" height="12" viewBox="0 0 14 12"><path d="M3 .7H.7V4M11 .7h2.300V4M3 11.300H.7V8M11 11.300h2.300V8"/><circle cx="7" cy="6" r="2.800"/></svg></button>
    <div class="position-relative d-flex"><select class="zoomsel" aria-label="缩放"><option>90%</option></select><svg class="selchev position-absolute" width="9" height="8" style="color:#555" viewBox="0 0 9 8"><path d="M.5 2l4 4 4-4" class="ln"/></svg></div>
    <button style="margin:0 14px 0 17px" aria-label="缩小"><svg width="14" height="14" viewBox="0 0 15 15" fill="none" stroke-width="1.300"><circle cx="6" cy="6" r="5.200" stroke="#333"/><path d="M10 10l5 5" stroke="#333"/><path d="M3 6h6" stroke="#0067c0"/></svg></button>
    <input class="slide" type="range" min="0" max="100" value="9" aria-label="缩放滑块">
    <button style="margin:0 13px" aria-label="放大"><svg width="14" height="14" viewBox="0 0 15 15" fill="none" stroke-width="1.300"><circle cx="6" cy="6" r="5.200" stroke="#333"/><path d="M10 10l5 5" stroke="#333"/><path d="M6 3v6M3 6h6" stroke="#0067c0"/></svg></button>
  </div>
</section>
<script src="https://cdn.jsdelivr.net/npm/bootstrap@5.3.0/dist/js/bootstrap.bundle.min.js"></script>
<script>
/* two rows of standard colours, then a row of empty custom slots */
const colours=['#000','#7f7f7f','#880015','#ed1c24','#ff7f27','#fff200','#22b14c','#00a2e8','#3f48cc','#a349a4','#fff','#c3c3c3','#b97a57','#ffaec9','#ffc90e','#efe4b0','#b5e61d','#99d9ea','#7092be','#c8bfe7'];
document.getElementById('swatches').innerHTML=Array.from({length:30},(_,n)=>`<button aria-label="色块 ${n+1}"><i style="background:${colours[n]||'transparent'}"></i></button>`).join('');
</script>
</body>
</html>
